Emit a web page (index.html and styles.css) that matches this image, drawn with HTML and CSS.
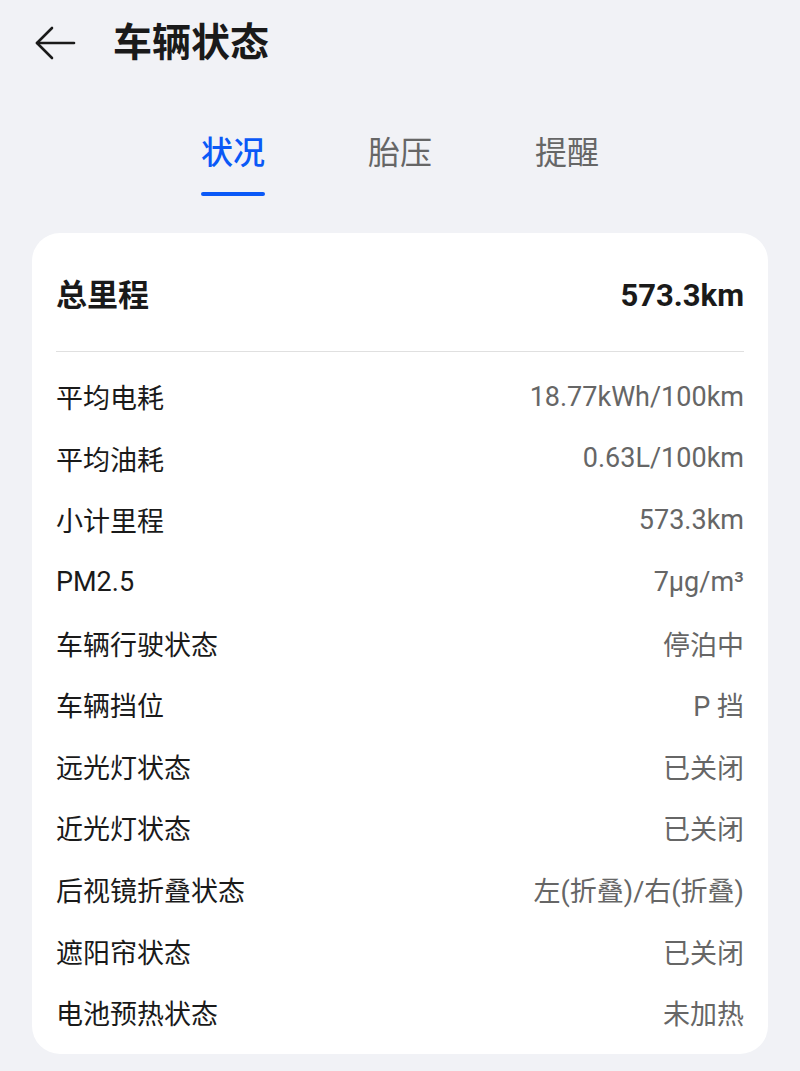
FILE: index.html
```html
<!DOCTYPE html>
<html lang="zh-CN">
<head>
    <meta charset="UTF-8">
    <meta name="viewport" content="width=device-width, initial-scale=1.0">
    <title>车辆状态</title>
    <link rel="stylesheet" href="styles.css">
</head>
<body>
    <div class="header">
        <button class="back-button" id="back-button">
            <svg width="42" height="36" viewBox="0 0 42 36" fill="none" stroke="#1a1a1a" stroke-width="2.6" stroke-linecap="round" stroke-linejoin="round">
                <path d="M40 18H3"/>
                <path d="M18 3L3 18L18 33"/>
            </svg>
        </button>
        <div class="title">车辆状态</div>
    </div>
    <div class="tabs">
        <div class="tab active">状况</div>
        <div class="tab">胎压</div>
        <div class="tab">提醒</div>
    </div>
    <div class="card">
        <div class="total-row">
            <span class="total-label">总里程</span>
            <span class="total-value">573.3km</span>
        </div>
        <div class="divider"></div>
        <div class="row"><span class="label">平均电耗</span><span class="value">18.77kWh/100km</span></div>
        <div class="row"><span class="label">平均油耗</span><span class="value">0.63L/100km</span></div>
        <div class="row"><span class="label">小计里程</span><span class="value">573.3km</span></div>
        <div class="row"><span class="label">PM2.5</span><span class="value">7μg/m³</span></div>
        <div class="row"><span class="label">车辆行驶状态</span><span class="value">停泊中</span></div>
        <div class="row"><span class="label">车辆挡位</span><span class="value">P 挡</span></div>
        <div class="row"><span class="label">远光灯状态</span><span class="value">已关闭</span></div>
        <div class="row"><span class="label">近光灯状态</span><span class="value">已关闭</span></div>
        <div class="row"><span class="label">后视镜折叠状态</span><span class="value">左(折叠)/右(折叠)</span></div>
        <div class="row"><span class="label">遮阳帘状态</span><span class="value">已关闭</span></div>
        <div class="row"><span class="label">电池预热状态</span><span class="value">未加热</span></div>
    </div>
</body>
</html>
```

FILE: styles.css
```css
body {
    margin: 0;
    background-color: #f1f2f6;
    font-family: Roboto, "Noto Sans CJK SC", sans-serif;
    color: #1a1a1a;
}
.header {
    display: flex;
    align-items: center;
    height: 86px;
    padding-left: 34px;
}
.back-button {
    display: flex;
    align-items: center;
    padding: 0;
    border: none;
    background: none;
    cursor: pointer;
    outline: none;
}
.title {
    margin-left: 37px;
    font-size: 39px;
    font-weight: bold;
    line-height: 44px;
}
.tabs {
    display: flex;
    justify-content: center;
    gap: 103px;
    margin-top: 45px;
}
.tab {
    position: relative;
    font-size: 32px;
    line-height: 44px;
    color: #666;
    padding-bottom: 21px;
}
.tab.active {
    color: #0a59f7;
    font-weight: 500;
}
.tab.active::after {
    content: "";
    position: absolute;
    left: 0;
    right: 0;
    bottom: 0;
    height: 4px;
    border-radius: 2px;
    background-color: #0a59f7;
}
.card {
    margin: 37px 32px 0;
    padding: 0 24px 10px;
    background-color: #fff;
    border-radius: 28px;
}
.total-row {
    display: flex;
    justify-content: space-between;
    align-items: center;
    padding: 43px 0 35px;
    line-height: 40px;
    font-size: 31px;
    font-weight: bold;
}
.divider {
    height: 1px;
    background-color: #e0e0e0;
    margin-bottom: 14px;
}
.row {
    display: flex;
    justify-content: space-between;
    align-items: center;
    height: 61.6px;
    font-size: 27px;
}
.value {
    color: #666;
}
```
